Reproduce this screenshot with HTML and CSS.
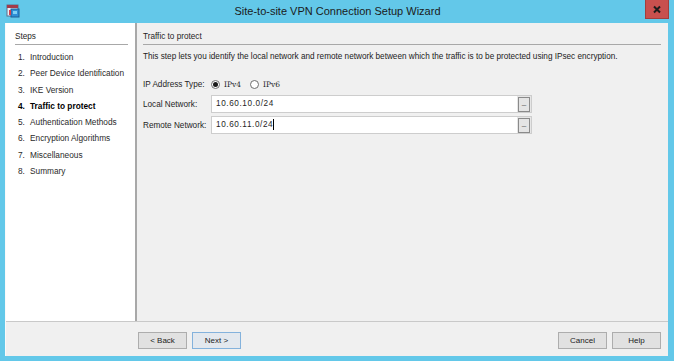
FILE: index.html
```html
<!DOCTYPE html>
<html lang="en">
<head>
  <meta charset="UTF-8" />
  <title>Site-to-site VPN Connection Setup Wizard</title>
  <link rel="stylesheet" href="styles.css">
</head>
<body>
  <div class="window">
    <div class="titlebar">
      <svg class="app-icon" width="14" height="14" viewBox="0 0 14 14">
        <rect x="1" y="1" width="11" height="11" fill="#e9eef5" stroke="#5b6f8c" stroke-width="1"/>
        <rect x="1" y="1" width="11" height="3" fill="#a33a4a"/>
        <rect x="5" y="5" width="8" height="8" fill="#2f8fd6" stroke="#1d5f98" stroke-width="1"/>
        <rect x="7" y="7" width="4" height="3" fill="#7fd0f5"/>
        <rect x="3" y="6" width="2" height="5" fill="#d4404f"/>
      </svg>
      <div class="title">Site-to-site VPN Connection Setup Wizard</div>
      <div class="close-btn">
        <svg width="10" height="9" viewBox="0 0 10 9">
          <path d="M2 1.5 L8 7.5 M8 1.5 L2 7.5" stroke="#1c1c1c" stroke-width="2"/>
        </svg>
      </div>
    </div>

    <div class="client">
      <div class="main">
        <div class="steps">
          <div class="panel-head">Steps</div>
          <ol class="step-list">
            <li><span class="num">1.</span>Introduction</li>
            <li><span class="num">2.</span>Peer Device Identification</li>
            <li><span class="num">3.</span>IKE Version</li>
            <li class="current"><span class="num">4.</span>Traffic to protect</li>
            <li><span class="num">5.</span>Authentication Methods</li>
            <li><span class="num">6.</span>Encryption Algorithms</li>
            <li><span class="num">7.</span>Miscellaneous</li>
            <li><span class="num">8.</span>Summary</li>
          </ol>
        </div>

        <div class="content">
          <div class="panel-head">Traffic to protect</div>
          <p class="desc">This step lets you identify the local network and remote network between which the traffic is to be protected using IPsec encryption.</p>

          <div class="form">
            <div class="row radio-row">
              <span class="label">IP Address Type:</span>
              <span class="radio checked"></span><span class="radio-text">IPv4</span>
              <span class="radio"></span><span class="radio-text">IPv6</span>
            </div>
            <div class="row">
              <span class="label">Local Network:</span>
              <div class="field">
                <div class="field-text">10.60.10.0/24</div>
                <div class="browse">&ndash;</div>
              </div>
            </div>
            <div class="row">
              <span class="label">Remote Network:</span>
              <div class="field">
                <div class="field-text">10.60.11.0/24<span class="caret"></span></div>
                <div class="browse">&ndash;</div>
              </div>
            </div>
          </div>
        </div>
      </div>

      <div class="footer">
        <div class="nav-buttons">
          <button class="btn">&lt; Back</button>
          <button class="btn default">Next &gt;</button>
        </div>
        <div class="nav-buttons">
          <button class="btn">Cancel</button>
          <button class="btn">Help</button>
        </div>
      </div>
    </div>
  </div>
</body>
</html>
```

FILE: styles.css
```css
body {
  margin: 0;
  padding: 0;
  font-family: "Liberation Sans", Arial, sans-serif;
  font-size: 8.2px;
  color: #1e1e1e;
}
.window {
  width: 674px;
  height: 361px;
  background: #63c8e9;
  display: flex;
  flex-direction: column;
  box-sizing: border-box;
}
.titlebar {
  height: 23px;
  display: flex;
  align-items: center;
}
.app-icon {
  margin-left: 6px;
  margin-top: -2px;
}
.title {
  flex: 1;
  text-align: center;
  font-size: 11px;
  color: #1b1b1b;
  margin-left: 10px;
  margin-top: -2px;
}
.close-btn {
  width: 24px;
  height: 19px;
  margin-right: 5px;
  align-self: flex-start;
  background: #c8504e;
  border: 1px solid #a23f3d;
  border-top: none;
  box-sizing: border-box;
  display: flex;
  align-items: center;
  justify-content: center;
}
.client {
  flex: 1;
  margin: 0 6px 5px 5px;
  background: #f0f0f0;
  border-left: 1px solid #fafafa;
  display: flex;
  flex-direction: column;
}
.main {
  flex: 1;
  display: flex;
  border-bottom: 1px solid #c9c9c9;
}
.steps {
  width: 131px;
  background: #fff;
  border-right: 2px solid #a8a8a8;
  padding: 7px 7px 0 9px;
  box-sizing: border-box;
}
.panel-head {
  height: 14px;
  line-height: 14px;
  border-bottom: 1px solid #a8a8a8;
}
.step-list {
  list-style: none;
  margin: 4px 0 0;
  padding: 0 0 0 3px;
}
.step-list li {
  height: 16.3px;
  line-height: 16.3px;
  font-size: 8.3px;
  color: #2a2a2a;
}
.step-list li.current {
  font-weight: bold;
  color: #000;
}
.num {
  display: inline-block;
  width: 12px;
}
.content {
  flex: 1;
  padding: 7px 7px 0 6px;
}
.desc {
  margin: 6px 0 0;
  line-height: 12px;
  color: #222;
}
.form {
  margin-top: 14px;
  display: flex;
  flex-direction: column;
  gap: 3px;
}
.row {
  display: flex;
  align-items: center;
  height: 18px;
}
.radio-row {
  height: 14px;
  margin-bottom: 1px;
}
.label {
  width: 68px;
  flex: none;
}
.radio {
  width: 9px;
  height: 9px;
  border: 1px solid #6e6e6e;
  border-radius: 50%;
  background: #fff;
  box-sizing: border-box;
  display: flex;
  align-items: center;
  justify-content: center;
}
.radio.checked::after {
  content: "";
  width: 5px;
  height: 5px;
  border-radius: 50%;
  background: #1a1a1a;
}
.radio-text {
  margin: 0 9px 0 4px;
  font-family: "DejaVu Serif", "Liberation Serif", serif;
  font-size: 7.5px;
}
.field {
  width: 321px;
  height: 18px;
  box-sizing: border-box;
  border: 1px solid #cdcdcd;
  background: #e6e6e6;
  display: flex;
  align-items: center;
}
.field-text {
  flex: 1;
  height: 16px;
  line-height: 16px;
  background: #fff;
  padding-left: 4px;
  letter-spacing: 0.6px;
  margin-right: 1px;
}
.caret {
  display: inline-block;
  width: 1px;
  height: 11px;
  background: #000;
  vertical-align: middle;
}
.browse {
  width: 12px;
  height: 15px;
  box-sizing: border-box;
  border: 1px solid #8a8a8a;
  background: #e4e4e4;
  margin-right: 1px;
  font-size: 8px;
  line-height: 13px;
  text-align: center;
  color: #555;
}
.footer {
  height: 34px;
  display: flex;
  justify-content: space-between;
  padding: 10px 7px 0 132px;
  box-sizing: border-box;
}
.nav-buttons {
  display: flex;
  gap: 5px;
}
.btn {
  width: 49px;
  height: 17px;
  padding: 0;
  font-family: "Liberation Sans", Arial, sans-serif;
  font-size: 8px;
  color: #222;
  background: #e1e1e1;
  border: 1px solid #adadad;
}
.btn.default {
  border-color: #84b2dc;
  background: #e3e8ee;
}
```
